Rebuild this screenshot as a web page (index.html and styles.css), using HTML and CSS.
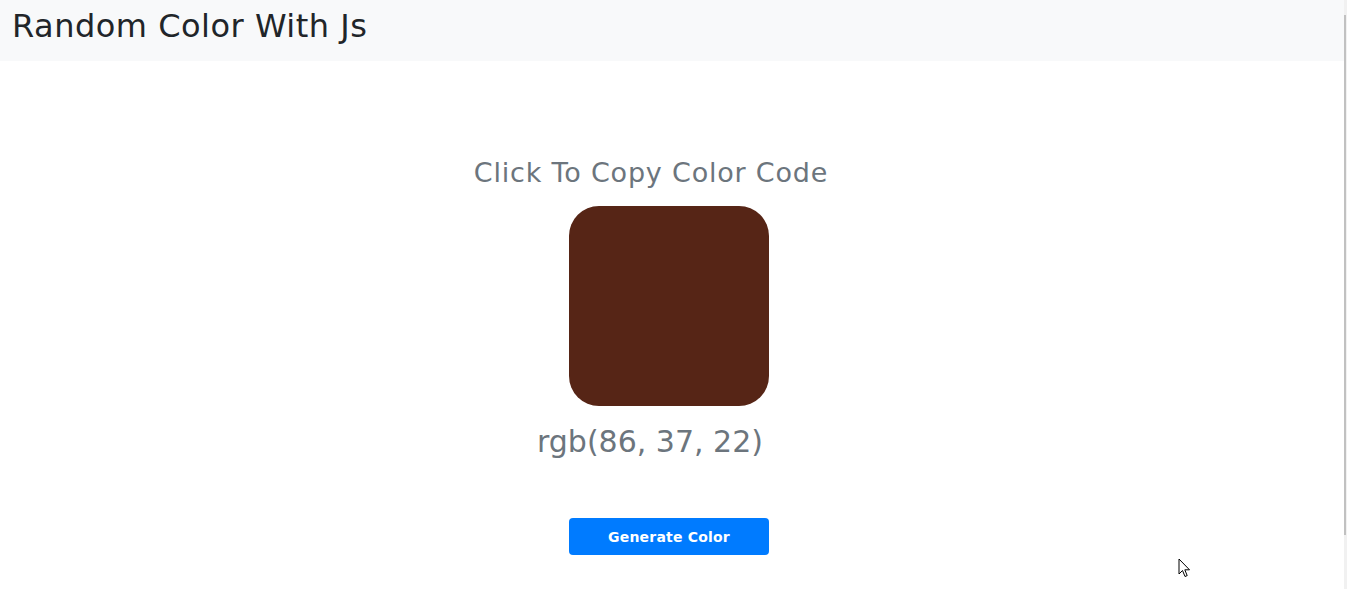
FILE: index.html
```html
<!DOCTYPE html>
<html>
<head>
<meta charset="utf-8">
<link rel="stylesheet" href="styles.css">
</head>
<body>
<header class="navbar">
  <h1 class="brand">Random Color With Js</h1>
</header>
<main class="main">
  <h2 class="hint">Click To Copy Color Code</h2>
  <div class="swatch" style="background: rgb(86, 37, 22);"></div>
  <p class="code">rgb(86, 37, 22)</p>
  <button class="btn">Generate Color</button>
</main>
<div class="scrollbar"><div class="thumb"></div></div>
<svg class="cursor" width="13" height="21" viewBox="0 0 13 21">
  <path d="M1 1 L1 16 L4.5 12.5 L7 18.5 L9.2 17.6 L6.8 11.8 L11.5 11.8 Z" fill="#fff" stroke="#000" stroke-width="1" stroke-linejoin="miter"/>
</svg>
</body>
</html>
```
FILE: styles.css
```css
html, body {
  margin: 0;
  padding: 0;
  background: #fff;
  font-family: "DejaVu Sans", sans-serif;
  overflow: hidden;
}
body {
  width: 1344px;
  height: 589px;
}
.navbar {
  height: 61px;
  box-sizing: border-box;
  background: #f8f9fa;
  display: flex;
  align-items: flex-start;
  padding: 6px 12px 0;
}
.brand {
  margin: 0;
  font-size: 32px;
  line-height: 40px;
  font-weight: 400;
  color: #212529;
  letter-spacing: 0.5px;
}
.main {
  display: flex;
  flex-direction: column;
  align-items: center;
  padding-top: 95px;
}
.hint {
  margin: 0;
  font-size: 27px;
  font-weight: 400;
  color: #6c757d;
  line-height: 34px;
  letter-spacing: 0.8px;
  position: relative;
  left: -21px;
}
.swatch {
  width: 200px;
  height: 200px;
  border-radius: 30px;
  margin-top: 16px;
  position: relative;
  left: -3px;
}
.code {
  margin: 18px 0 0;
  font-size: 30px;
  color: #6c757d;
  line-height: 36px;
  position: relative;
  left: -22px;
}
.btn {
  margin-top: 58px;
  width: 200px;
  height: 37px;
  border: none;
  border-radius: 4px;
  background: #007bff;
  color: #fff;
  font-family: "DejaVu Sans", sans-serif;
  font-size: 14px;
  font-weight: 700;
  letter-spacing: 0.2px;
  position: relative;
  left: -3px;
}
.scrollbar {
  position: fixed;
  top: 0;
  right: 0;
  width: 3px;
  height: 589px;
  background: #f1f1f1;
}
.thumb {
  position: absolute;
  left: 0;
  top: 15px;
  width: 2px;
  height: 520px;
  background: #c1c1c1;
}
.cursor {
  position: fixed;
  left: 1178px;
  top: 558px;
}
```
